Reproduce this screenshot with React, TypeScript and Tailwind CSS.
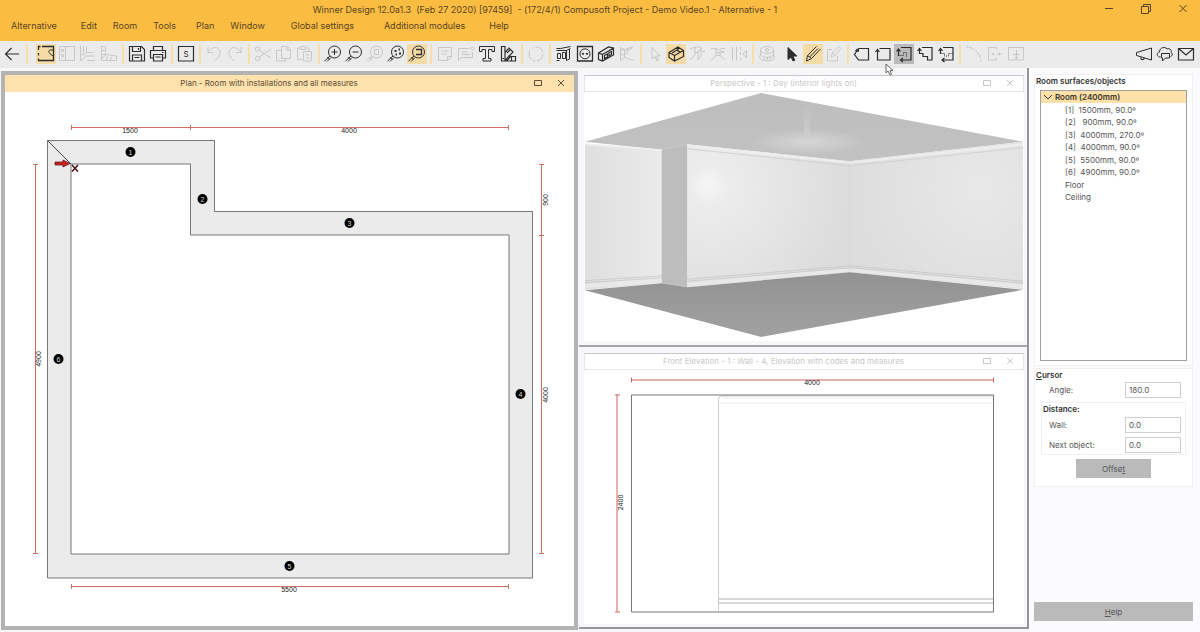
import React from 'react';
import clsx from 'clsx';

type Tool = {
  name: string;
  icon: React.ReactNode;
  state?: 'on' | 'pressed' | 'off';
};

const menus = [
  { label: 'Alternative', gap: 'mr-6' },
  { label: 'Edit', gap: 'mr-4' },
  { label: 'Room', gap: 'mr-4' },
  { label: 'Tools', gap: 'mr-5' },
  { label: 'Plan', gap: 'mr-4' },
  { label: 'Window', gap: 'mr-[26px]' },
  { label: 'Global settings', gap: 'mr-[30px]' },
  { label: 'Additional modules', gap: 'mr-6' },
  { label: 'Help', gap: '' },
];

const lens = (
  <>
    <circle cx="11.5" cy="8" r="6" />
    <path d="M7 12l-5.500 5M8 13.500l-4 4M4.500 13l2 2.500" />
  </>
);

// Tools are listed group by group, a separator is drawn after each group
const toolGroups: Tool[][] = [
  [
    { name: 'Room', state: 'on', icon: <><path d="M6 2.500h11.500v14H2.500v-2M2.500 11.500v-2.500M2.500 6v-3.500H4.500" strokeWidth="1.300" /><path d="M17.500 6h-3c-2.500 0-2 3 .500 4.500l2.500 2" /></> },
    { name: 'Units', state: 'off', icon: <><path d="M2.500 2.500h15v14h-15zM8.500 2.500v14" /><path d="M4.500 5.500h2v2h-2zM4.500 10.500h2v2h-2z" /></> },
    { name: 'Worktops', state: 'off', icon: <path d="M2.500 2v15M5.500 2v7l-3 3M8.500 2v6.500h7M5.500 11.500l3-3M3 16.500l5-4.500h9M9 16.500h8" /> },
    { name: 'Plinths', state: 'off', icon: <path d="M2.500 2.500h4v8l11 1.500v4.500h-15zM2.500 6.500h3M2.500 10.500h4M6.500 10.500l-4 5M8.500 12l-1 4M12.500 13l-1 3" /> },
  ],
  [
    { name: 'Save', icon: <path d="M2.500 2.500h12l3 3v11.500h-15zM5.500 2.500v5h8v-5M11.500 4v2M5.500 17v-6h9v6M7.500 13.500h5" strokeWidth="1.200" /> },
    { name: 'Print', icon: <path d="M5.500 6.500v-4h9v4M5.500 14H2.500v-7.500h15V14h-3M5.500 10.500h9v6.500h-9zM7.500 13h5M14 8.500h1.500" strokeWidth="1.200" /> },
  ],
  [
    { name: 'Summary', icon: <><path d="M2.500 2.500h15v14.500h-15z" strokeWidth="1.200" /><text x="10" y="13" textAnchor="middle" fontSize="8" fill="currentColor" stroke="none">S</text></> },
  ],
  [
    { name: 'Undo', state: 'off', icon: <path d="M4 3v5.500h5.500M4 8.500c3-5 7-6 10-4 4 3 2 8-3 12.500" /> },
    { name: 'Redo', state: 'off', icon: <path d="M16 3v5.500h-5.500M16 8.500c-3-5-7-6-10-4-4 3-2 8 3 12.500" /> },
  ],
  [
    { name: 'Cut', state: 'off', icon: <><circle cx="4.500" cy="5" r="2.200" /><circle cx="4.500" cy="14.500" r="2.200" /><path d="M6.500 6.500L18 14M6.500 13L18 5" /></> },
    { name: 'Copy', state: 'off', icon: <path d="M7.500 2.500h6l3 3v9h-9zM13 2.500v3.500h3.500M7.500 6.500h-5v10.500h9v-2.500" /> },
    { name: 'Paste', state: 'off', icon: <path d="M7 15.500H2.500V4H5M11 4h3v3M5.500 2.500h5v3h-5zM8.500 7.500h8v9.500h-8zM11 11h3.500M11 14h3.500" /> },
  ],
  [
    { name: 'Zoom in', icon: <>{lens}<path d="M8.500 8h6M11.500 5v6" /></> },
    { name: 'Zoom out', icon: <>{lens}<path d="M8.500 8h6" /></> },
    { name: 'Zoom area', state: 'off', icon: <>{lens}<path d="M9.500 5.500h4v5h-4z" /></> },
    { name: 'Zoom selection', icon: <>{lens}<path d="M8.500 7h2M12.500 5.500h1.500M9.500 10.500h1.500M13 9.500h2" strokeWidth="2" /></> },
    { name: 'Zoom all', state: 'on', icon: <>{lens}<path d="M9 5.500h5.500v5h-5.500" strokeWidth="1.300" /></> },
  ],
  [
    { name: 'Note', state: 'off', icon: <path d="M3.500 3.500h13v9l-4 4h-9zM16.500 12.500h-4v4M6 7h8M6 10h6" /> },
    { name: 'Comment', state: 'off', icon: <><path d="M13 4.500H2.500v12l3-3h11V8M5.500 8h6M5.500 10.500h8" /><circle cx="16.500" cy="4.500" r="1.500" /></> },
    { name: 'Text', icon: <path d="M2.500 2.500h15v5h-2.500v-2h-3.500v9h2.500v2.500h-8v-2.500h2.500v-9h-3.500v2h-2.500z" /> },
    { name: 'Materials', icon: <path d="M3.500 2.500h3.500v14.500H3.500zM7 8.500l4-4.500 4 4-8 8.500M9 9l3-3M3.500 17h14v-4.500H12.500L8.500 17M13.500 17v-4.500M4.500 14.500h1.500M10 12l4 1" strokeWidth="1.200" /> },
  ],
  [
    { name: 'Refresh', state: 'off', icon: <circle cx="10" cy="10" r="7" strokeDasharray="10 2 2 2" /> },
  ],
  [
    { name: 'Items', icon: <path d="M2.500 4.500h4l10-2M2.500 6.500h10l4-2M12.500 6.500v10l3-1.500V5M3.500 9.500h3v5h-3zM8.500 8.500h3v6h-3zM2.500 16.500h3" /> },
    { name: 'Sockets', icon: <><path d="M2.500 2.500h15v14.500h-15z" strokeWidth="1.300" /><circle cx="10" cy="9.800" r="5" /><circle cx="8" cy="9.800" r=".7" fill="currentColor" /><circle cx="12" cy="9.800" r=".7" fill="currentColor" /></> },
    { name: 'Wall units', icon: <path d="M2.500 9l10-6 5 1v7l-11 6-4-1.500zM2.500 9l4 1.500v6.500M6.500 10.500l11-6.500M8.500 11.500l3-1.500v3l-3 1.500zM13 8.500l2.500-1v3L13 12z" strokeWidth="1.200" /> },
    { name: 'Corner', state: 'off', icon: <path d="M3.500 3.500v13l4-3v-8l9-3M3.500 3.500l4 2M3.500 6h7l5-2M7.500 13.500l9 3M3.500 11c5 0 7-2 8-5" /> },
  ],
  [
    { name: 'Pick', state: 'off', icon: <path d="M7 3.500v11.500l3-2.500 2 4.500 1.500-.800-2-4.200h3.500z" /> },
    { name: 'Perspective view', state: 'on', icon: <path d="M3 8.500l9-5.500 5.500 3.500v6l-9 4.500-5.500-3.500zM3 8.500l5.500 3v5.500M8.500 11.500l9-5M6 9l6-3.500M12 3v4l3 1" strokeWidth="1.200" /> },
    { name: 'Wall view', state: 'off', icon: <path d="M3 5l5-2v8l-5 5M8 3h6v9l-3 4v-9l4-2M8 9l3-1M15 8l3-1" /> },
    { name: 'Ceiling view', state: 'off', icon: <path d="M3 4.500h5l8 3.500M8 4.500v7l-5 5M8 8.500h8M12 4.500h5M12 11.500l5 4M8 11.500h4v-3" /> },
    { name: 'Flip view', state: 'off', icon: <path d="M3.500 2.500v14M7.500 2.500v14M11.500 2.500v3M11.500 8v3M11.500 14v2.500M17.500 6v8l-3.500-4z" /> },
  ],
  [
    { name: 'Measure', state: 'off', icon: <><ellipse cx="10" cy="6" rx="6.500" ry="3.500" /><path d="M3.500 6v4c0 4.500 13 4.500 13 0V6M3.500 10l-1 3c1 5 15 5 15 0l-1-3M7.500 13.500v2M10.500 14v2M13.500 13v2" /><circle cx="10" cy="6" r="1.500" /></> },
  ],
];

const editTools: Tool[][] = [
  [
    { name: 'Select', icon: <path d="M6 3.500v12l3-2.500 2 4 1.800-.800-2-4.200h4z" fill="currentColor" /> },
    { name: 'Draw', state: 'on', icon: <path d="M3.500 17l1-5.500L13.500 2.500M3.500 17l5-2.500L17.500 5M4.500 11.500l4 3M6.500 13l8.500-8.500" /> },
    { name: 'Redraw', state: 'off', icon: <path d="M8 5.500H3.500v11.500H13.500v-5M7 13l1.500-4.500 6.500-6 2 2-6 7zM8.500 8.500l2.500 3" /> },
  ],
  [
    { name: 'Close shape', icon: <><path d="M7 4.500h9.500v11.500H6.500l-4-5.500 2.500-4" strokeWidth="1.200" /><path d="M3.500 6.500L6.500 4.500v3z" fill="currentColor" /></> },
    { name: 'Rectangle', icon: <path d="M6.500 4.500h10.500v11.500h-12.500V5.500M2.500 8l2-2.500 2 2.500" strokeWidth="1.200" /> },
    { name: 'Rectangle by wall', state: 'pressed', icon: <><path d="M7 3.500h10v12.500H7M4.500 12V5M2.500 7.500l2-2.500 2 2.500M9 14l-2.500 2 2.500 2" strokeWidth="1.200" /><path d="M4.500 11.500h5v-3h3v4" strokeDasharray="1 1" /></> },
    { name: 'Stepped shape', icon: <path d="M7 3.500h10v12.500h-4.500v-3.500H8v-3H4.500V5M2.500 7l2-2.500 2 2.500" strokeWidth="1.200" /> },
    { name: 'Open shape', icon: <><path d="M7 3.500h10v12.500H6.500M4.500 10V5M2.500 7l2-2.500 2 2.500M8.500 14l-2.500 2 2.500 2" strokeWidth="1.200" /><path d="M4.500 9.500h4v2.500h4V9.500h4" strokeDasharray="1 1" /></> },
  ],
  [
    { name: 'Arc', state: 'off', icon: <path d="M2 3c8 0 14 6 15 15M3 2l5 2M13 9l4 3" strokeDasharray="2 1.500" /> },
    { name: 'Split', state: 'off', icon: <path d="M11.500 3.500H3.500v12.500h8M11.500 3.500v2M11.500 14v2M6.500 10h3M12 10h5M8 8.500v3M14.500 8.500v3" /> },
    { name: 'Insert', state: 'off', icon: <path d="M2.500 3.500h15v12.500h-15zM10.500 6v9M7 10.500h6M8.500 13l2 2 2-2" /> },
  ],
];

const communication: Tool[] = [
  { name: 'News', icon: <path d="M17.500 4v12L2.500 11.500v-3zM7 13v2.500h3V14" /> },
  { name: 'Cloud', icon: <path d="M5.500 13H4.500c-3-1-3-4.500 0-5 0-5 6-5.500 7.500-3 3-1 5 1 4 3.500 2 1 1.500 3.500-.500 4M6.500 9.500h8v4.500h-4L7.500 17v-3H6.500z" /> },
  { name: 'Mail', icon: <path d="M2.500 4.500h15v11.500h-15zM2.500 4.500l7.500 6.500 7.500-6.500" strokeWidth="1.200" /> },
];

const surfaces = [
  '[1]\u00a0 1500mm, 90.0º',
  '[2]\u00a0\u00a0 900mm, 90.0º',
  '[3]\u00a0 4000mm, 270.0º',
  '[4]\u00a0 4000mm, 90.0º',
  '[5]\u00a0 5500mm, 90.0º',
  '[6]\u00a0 4900mm, 90.0º',
  'Floor',
  'Ceiling',
];

const ToolButton: React.FC<{ tool: Tool }> = ({ tool }) => (
  <button
    aria-label={tool.name}
    disabled={tool.state === 'off'}
    className={clsx(
      'size-5 shrink-0',
      tool.state === 'off' ? 'text-[#c8c8c8]' : 'text-[#2d2d2d]',
      tool.state === 'on' && 'bg-[#f5dba5]',
      tool.state === 'pressed' && 'bg-[#bababa]'
    )}
  >
    <svg viewBox="0 0 20 20" className="size-5" fill="none" stroke="currentColor">
      {tool.icon}
    </svg>
  </button>
);

const ToolGroups: React.FC<{ groups: Tool[][] }> = ({ groups }) => (
  <>
    {groups.map((group, index) => (
      <React.Fragment key={group[0].name}>
        {index > 0 && <span className="mx-[3px] h-5 w-[2px] shrink-0 bg-[#f8deaa]" />}
        <div className="flex gap-px">
          {group.map((tool) => (
            <ToolButton key={tool.name} tool={tool} />
          ))}
        </div>
      </React.Fragment>
    ))}
  </>
);

const ViewTitle: React.FC<{ title: string; active?: boolean }> = ({ title, active }) => (
  <div
    className={clsx(
      'flex h-[17px] shrink-0 items-center pr-2 pb-[2px]',
      active ? 'bg-[#fee2ae] text-[#5c4c33]' : 'border border-[#e6e6ea] border-t-[#c6c6cc] bg-white text-[#c8c8c8]'
    )}
  >
    <h2 className="flex-1 text-center text-[8px] leading-[14px]">{title}</h2>
    <button aria-label="Maximize view" className="mr-[13px]">
      <svg viewBox="0 0 10 10" className="size-[10px]" fill="none" stroke="currentColor"><path d="M1.500 2.500h7v5h-7z" /></svg>
    </button>
    <button aria-label="Close view">
      <svg viewBox="0 0 10 10" className="size-[10px]" fill="none" stroke="currentColor"><path d="M2 2l6 6M8 2l-6 6" /></svg>
    </button>
  </div>
);

const PlanDrawing: React.FC = () => {
  const badges = [
    [130, 152], [202, 199], [349, 223], [520, 394], [289, 566], [58, 359],
  ];
  return (
    <svg viewBox="5 92 569 534" className="min-h-0 w-full grow basis-0 bg-white" aria-label="Room plan">
      <path d="M47.500 140.500h167v71h318v366.500h-485z" fill="#ebebeb" stroke="#777" />
      <path d="M71 164h119.500v71h318.500v319H71z" fill="#fff" stroke="#777" />
      <path d="M47.500 140.500L71 164" stroke="#444" />
      <g stroke="#cb6f67" fill="none">
        <path d="M71 127.500h438M71.500 125v5M190.500 125v5M508.500 125v5" />
        <path d="M71 586.500h438M71.500 584v5M508.500 584v5" />
        <path d="M35.500 164v390M33 164.500h5M33 553.500h5" />
        <path d="M541.500 164v390M539 164.500h5M539 235.500h5M539 553.500h5" />
      </g>
      <g className="font-['Liberation_Sans'] text-[7px]" fill="#222" textAnchor="middle">
        <text x="130" y="133">1500</text>
        <text x="349" y="133">4000</text>
        <text x="289" y="592">5500</text>
        <text transform="translate(41 359) rotate(-90)">4900</text>
        <text transform="translate(548 200) rotate(-90)">900</text>
        <text transform="translate(548 395) rotate(-90)">4000</text>
      </g>
      {badges.map(([x, y], index) => (
        <g key={index}>
          <circle cx={x + 0.5} cy={y} r="5" fill="#000" />
          <text x={x + 0.5} y={y + 3} textAnchor="middle" fill="#ddd" className="font-['Liberation_Sans'] text-[7px]">
            {index + 1}
          </text>
        </g>
      ))}
      <path d="M55 162h8v-2l7 3.500-7 3.500v-2h-8z" fill="#c22" stroke="#511" strokeWidth=".7" />
      <path d="M72 165l6 6.500M78 165l-6 6.500" stroke="#4a1010" strokeWidth="1.500" />
    </svg>
  );
};

const PerspectiveDrawing: React.FC = () => (
  <svg viewBox="584 92 440 250" className="min-h-0 w-full grow basis-0 bg-white" aria-label="Room perspective">
    <defs>
      <radialGradient id="ceilingLight" gradientUnits="userSpaceOnUse" cx="0" cy="0" r="1" gradientTransform="translate(808 142) scale(58 13)">
        <stop offset="0" stopColor="#d6d6d6" />
        <stop offset="1" stopColor="#d6d6d6" stopOpacity="0" />
      </radialGradient>
      <radialGradient id="wallLight" gradientUnits="userSpaceOnUse" cx="708" cy="186" r="140">
        <stop offset="0" stopColor="#f6f6f6" />
        <stop offset=".15" stopColor="#ececec" />
        <stop offset="1" stopColor="#dcdcdc" />
      </radialGradient>
      <radialGradient id="rightLight" gradientUnits="userSpaceOnUse" cx="982" cy="190" r="130">
        <stop offset="0" stopColor="#e8e8e8" />
        <stop offset="1" stopColor="#dddddd" />
      </radialGradient>
      <linearGradient id="leftLight">
        <stop offset="0" stopColor="#dfdfdf" />
        <stop offset="1" stopColor="#eaeaea" />
      </linearGradient>
      <linearGradient id="ceiling" x1="0" y1="0" x2="0" y2="1">
        <stop offset="0" stopColor="#bdbdbd" />
        <stop offset="1" stopColor="#c2c2c2" />
      </linearGradient>
      <linearGradient id="floor" x1="0" y1="0" x2="0" y2="1">
        <stop offset="0" stopColor="#929292" />
        <stop offset="1" stopColor="#a1a1a1" />
      </linearGradient>
      <linearGradient id="lightBeam" x1="0" y1="0" x2="0" y2="1">
        <stop offset="0" stopColor="#cacaca" stopOpacity="0" />
        <stop offset="1" stopColor="#cacaca" />
      </linearGradient>
    </defs>
    <path d="M761 93l-177 49 77 8 26-5.500 163 17 174-19.500z" fill="url(#ceiling)" />
    <path d="M803 104h8l-1 31h-6z" fill="url(#lightBeam)" />
    <path d="M761 93l-177 49 77 8 26-5.500 163 17 174-19.500z" fill="url(#ceilingLight)" />
    <path d="M584 144l77 6.500V284l-77 6.500z" fill="url(#leftLight)" />
    <path d="M661 150l26-5.500V288l-26-4z" fill="#bdbdbd" />
    <path d="M687 144.500l163 17V273l-163 15z" fill="url(#wallLight)" />
    <path d="M850 161.500L1024 142v148l-174-17z" fill="url(#rightLight)" />
    {/* cornice and skirting */}
    <path d="M584 144.500l77 6M687 146l163 17 174-18.500" stroke="#eee" strokeWidth="2" fill="none" />
    <path d="M687 149l163 17 174-18" stroke="#d3d3d3" fill="none" />
    <path d="M584 286.500l77-5.500M687 285.500l163-15 174 16.500" stroke="#e8e8e8" strokeWidth="4" fill="none" />
    <path d="M584 281.500l77-5M584 283.500l77-5M661 276.500l26 3.500M687 280l163-13.500 174 15.500M687 282l163-13.500 174 15.500" stroke="#c2c2c2" strokeWidth=".7" fill="none" />
    <path d="M850 162v111" stroke="#cfcfcf" strokeWidth=".7" />
    <path d="M584 291l77-7 26 4 163-15 174 17.500L761 338z" fill="url(#floor)" />
  </svg>
);

const ElevationDrawing: React.FC = () => (
  <svg viewBox="584 371 440 253" className="min-h-0 w-full grow basis-0 bg-white" aria-label="Wall elevation" fill="none">
    <path d="M631 380.500h362M631.500 378v5M993.500 378v5M617 395v217M615 395.500h5M615 612.500h5" stroke="#cb655d" />
    <path d="M718.500 611V399.500q0-3 4-3H993" stroke="#cdcdcd" />
    <path d="M720 403.500h273M723 398.500h270" stroke="#ededed" />
    <path d="M719 599.500h274M719 603.500h274" stroke="#b5b5b5" />
    <path d="M631.500 395.500h362v217h-362z" stroke="#777" />
    <g className="font-['Liberation_Sans'] text-[7px]" fill="#222" textAnchor="middle">
      <text x="812" y="386">4000</text>
      <text transform="translate(623 503) rotate(-90)">2400</text>
    </g>
  </svg>
);

const NumberField: React.FC<{ id: string; label: string; value: string }> = ({ id, label, value }) => (
  <div className="flex items-center justify-between">
    <label htmlFor={id}>{label}</label>
    <input id={id} defaultValue={value} className="h-4 w-14 border border-[#cfcfcf] bg-white pl-[3px] text-[8px]" />
  </div>
);

const App: React.FC = () => {
  return (
    <div className="flex min-h-screen flex-col bg-[#f7f7f9] font-['Inter',sans-serif] text-[8px] text-[#555]">
      <header className="relative bg-[#fbbc42] text-[9px] text-[#584422]">
        <h1 className="h-[19px] pr-[110px] text-center leading-[19px] whitespace-pre">
          Winner Design 12.0a1.3  (Feb 27 2020) [97459]  - (172/4/1) Compusoft Project - Demo Video.1 - Alternative - 1
        </h1>
        <div className="absolute top-1 right-3 flex gap-[27px]">
          <button aria-label="Minimize">
            <svg viewBox="0 0 10 10" className="size-[10px]" fill="none" stroke="currentColor"><path d="M1 4.500h8" /></svg>
          </button>
          <button aria-label="Restore">
            <svg viewBox="0 0 10 10" className="size-[10px]" fill="none" stroke="currentColor"><path d="M.500 2.500h7v7h-7zM2.500 2.500v-2h7v7h-2" /></svg>
          </button>
          <button aria-label="Close">
            <svg viewBox="0 0 10 10" className="size-[10px]" fill="none" stroke="currentColor"><path d="M1.500 1l7 7M8.500 1l-7 7" /></svg>
          </button>
        </div>
        <nav className="flex h-[22px] pl-[11px]">
          {menus.map((menu) => (
            <button key={menu.label} className={clsx('h-[14px] leading-[14px]', menu.gap)}>
              {menu.label}
            </button>
          ))}
        </nav>
      </header>

      <div className="flex h-[27px] items-center bg-[#ebebeb] pr-1 pb-px pl-[2px]">
        <ToolGroups
          groups={[[{ name: 'Back', icon: <path d="M17 10H3.500M9.500 4l-6 6 6 6" strokeWidth="1.200" /> }]]}
        />
        <span className="mr-2 ml-1 h-5 w-[2px] shrink-0 bg-[#f8deaa]" />
        <ToolGroups groups={toolGroups} />
        <span className="w-[5px] shrink-0" />
        <ToolGroups groups={editTools} />
        <div className="ml-auto flex gap-px">
          {communication.map((tool) => (
            <ToolButton key={tool.name} tool={tool} />
          ))}
        </div>
      </div>

      <main className="grid flex-1 grid-cols-[579fr_450fr_171fr]">
        <section className="mx-px mt-[3px] mb-[2px] flex flex-col border-4 border-[#b3b3b3]">
          <ViewTitle title="Plan - Room with installations and all measures" active />
          <PlanDrawing />
        </section>

        <div className="mb-[3px] grid grid-rows-[280fr_281fr] border-r-2 border-b-2 border-[#96969a]">
          <section className="flex flex-col border-b-2 border-[#a5a5a8] pt-[7px] pr-[3px] pb-1 pl-[5px]">
            <ViewTitle title="Perspective - 1 : Day (interior lights on)" />
            <PerspectiveDrawing />
          </section>
          <section className="flex flex-col pt-[6px] pr-[3px] pb-[3px] pl-[5px]">
            <ViewTitle title="Front Elevation - 1 : Wall - 4, Elevation with codes and measures" />
            <ElevationDrawing />
          </section>
        </div>

        <aside className="flex flex-col bg-[#fbfbfd] pt-[6px] pr-[7px] pb-[11px] pl-[5px]">
          <section className="border border-[#f0f0f2] bg-white px-[5px] pb-1">
            <h2 className="-ml-1 h-[15px] leading-3 font-semibold text-[#333]">Room surfaces/objects</h2>
            <div className="h-[271px] border border-[#a0a0a0]">
              <ul className="flex h-28 flex-col justify-between leading-3">
                <li className="flex items-center bg-[#fee0a9] font-semibold text-[#3c3325]">
                  <svg viewBox="0 0 10 10" className="mx-[2px] size-[10px]" fill="none" stroke="currentColor"><path d="M1 3l4 4 4-4" /></svg>
                  Room (2400mm)
                </li>
                {surfaces.map((surface) => (
                  <li key={surface} className="pl-6">{surface}</li>
                ))}
              </ul>
            </div>
          </section>

          <section className="mt-[2px] border border-[#f0f0f2] bg-white px-[6px] pb-2">
            <h2 className="-ml-[5px] h-[13px] leading-[13px] font-semibold text-[#333]"><u>C</u>ursor</h2>
            <div className="pr-[5px] pl-2">
              <NumberField id="angle" label="Angle:" value="180.0" />
            </div>
            <fieldset className="mt-1 border border-[#f0f0f2] pr-1 pb-px pl-[7px]">
              <h3 className="-ml-[6px] h-[14px] leading-3 font-semibold text-[#333]">Distance:</h3>
              <div className="flex flex-col gap-1">
                <NumberField id="wall" label="Wall:" value="0.0" />
                <NumberField id="next-object" label="Next object:" value="0.0" />
              </div>
            </fieldset>
            <button className="mx-auto mt-1 block h-[19px] w-[75px] bg-[#bababb]">Offse<u>t</u></button>
          </section>

          <button className="mt-auto h-[19px] w-full bg-[#bababb]"><u>H</u>elp</button>
        </aside>
      </main>

      <svg viewBox="0 0 10 14" className="pointer-events-none absolute top-[63px] left-[885px] h-[14px] w-[10px]" fill="#fff" stroke="#666">
        <path d="M1 1v9l2-2 2 4 1.500-.700L5 7.500h3z" />
      </svg>
    </div>
  );
};

export default App;
